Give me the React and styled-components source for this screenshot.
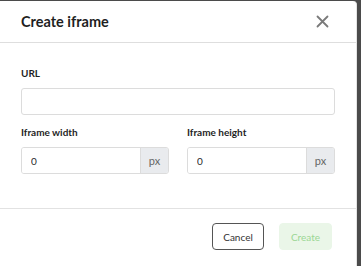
import React from 'react'
import styled, { createGlobalStyle } from 'styled-components'

const Global = createGlobalStyle`
  html, body {
    margin: 0;
    padding: 0;
    background: #4b4b4b;
    height: 266px;
    overflow: hidden;
  }
  * { box-sizing: border-box; }
`

const App = () => {
  return (
    <>
      <Global />
      <Dialog>
        <Header>
          <Title>Create iframe</Title>
          <Close aria-label="Close">
            <svg width="13" height="13" viewBox="0 0 13 13">
              <path d="M1.5 1.5 L11.5 11.5 M11.5 1.5 L1.5 11.5" stroke="#7a7a7a" strokeWidth="1.8" strokeLinecap="round" />
            </svg>
          </Close>
        </Header>

        <Body>
          <Field>
            <Label>URL</Label>
            <TextInput />
          </Field>

          <Row>
            <Field>
              <Label>Iframe width</Label>
              <Group>
                <GroupInput defaultValue="0" />
                <Addon>px</Addon>
              </Group>
            </Field>
            <Field>
              <Label>Iframe height</Label>
              <Group>
                <GroupInput defaultValue="0" />
                <Addon>px</Addon>
              </Group>
            </Field>
          </Row>
        </Body>

        <Footer>
          <Button>Cancel</Button>
          <Button primary disabled>Create</Button>
        </Footer>
      </Dialog>
    </>
  )
}

export default App

const Dialog = styled.div`
  margin-top: 1px;
  width: 357px;
  height: 265px;
  background: #fff;
  border-top-right-radius: 4px;
  border-right: 1px solid #e4e4e4;
  font-family: "Source Sans Pro", "Lato", "Noto Sans", sans-serif;
  color: #222;
  display: flex;
  flex-direction: column;
`

const Header = styled.div`
  height: 42px;
  display: flex;
  align-items: center;
  justify-content: space-between;
  padding: 0 27px 0 21px;
  border-bottom: 1px solid #dedede;
`

const Title = styled.h2`
  margin: 0;
  font-size: 14.5px;
  font-weight: 700;
  color: #1f1f1f;
`

const Close = styled.button`
  border: 0;
  background: none;
  padding: 0;
  display: flex;
  cursor: pointer;
`

const Body = styled.div`
  padding: 24px 21px 0 21px;
  display: flex;
  flex-direction: column;
  gap: 11px;
  height: 166px;
  border-bottom: 1px solid #e2e2e2;
`

const Row = styled.div`
  display: grid;
  grid-template-columns: 148px 148px;
  column-gap: 18px;
`

const Field = styled.div`
  display: flex;
  flex-direction: column;
`

const Label = styled.label`
  font-size: 10px;
  font-weight: 700;
  color: #1f1f1f;
  height: 13px;
  line-height: 13px;
  margin-bottom: 8px;
`

const TextInput = styled.input`
  height: 27px;
  width: 100%;
  border: 1px solid #dcdcdc;
  border-radius: 3px;
  background: #fff;
  outline: none;
`

const Group = styled.div`
  display: flex;
  height: 27px;
  border: 1px solid #dcdcdc;
  border-radius: 3px;
  overflow: hidden;
`

const GroupInput = styled.input`
  flex: 1;
  min-width: 0;
  border: 0;
  outline: none;
  padding: 0 0 0 9px;
  font-family: inherit;
  font-size: 10px;
  color: #2a2a2a;
  background: #fff;
`

const Addon = styled.span`
  width: 28px;
  background: #e9ebee;
  border-left: 1px solid #dcdcdc;
  display: flex;
  align-items: center;
  justify-content: center;
  font-size: 11px;
  color: #666;
`

const Footer = styled.div`
  display: flex;
  justify-content: flex-end;
  gap: 15px;
  padding: 14px 24px 0 0;
`

const Button = styled.button`
  height: 27px;
  width: ${p => (p.primary ? '53px' : '52px')};
  border-radius: 4px;
  font-family: inherit;
  font-size: 10px;
  border: 1px solid ${p => (p.primary ? '#eaf6e8' : '#555')};
  background: ${p => (p.primary ? '#eaf6e8' : '#fff')};
  color: ${p => (p.primary ? '#9bd694' : '#333')};
  cursor: pointer;
`
